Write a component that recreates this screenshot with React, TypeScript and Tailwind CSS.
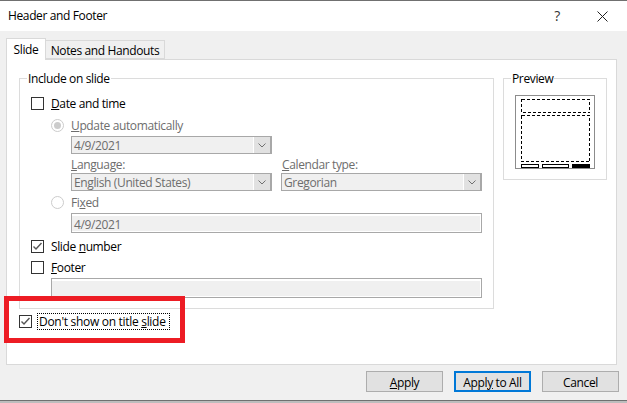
import React from "react";

const Check = ({ checked, className = "" }: { checked?: boolean; className?: string }) => (
  <span className={`flex h-[13px] w-[13px] shrink-0 items-center justify-center border border-[#333333] bg-white ${className}`}>
    {checked && (
      <svg width="11" height="11" viewBox="0 0 11 11" fill="none">
        <path d="M1.5 5.5 L4 8 L9.5 2" stroke="#555555" strokeWidth="1.4" />
      </svg>
    )}
  </span>
);

const Radio = ({ on }: { on?: boolean }) => (
  <span className="flex h-[13px] w-[13px] shrink-0 items-center justify-center rounded-full border border-[#cccccc] bg-white">
    {on && <span className="h-[7px] w-[7px] rounded-full bg-[#cccccc]" />}
  </span>
);

const Select = ({ text, className = "" }: { text: string; className?: string }) => (
  <div className={`flex h-[18px] border border-r-2 border-[#a8a8a8] bg-[#f0f0f0] text-[#6d6d6d] ${className}`}>
    <span className="flex-1 pl-[2px] pt-px leading-[16px]">{text}</span>
    <span className="flex w-[17px] items-center justify-center border-l border-white bg-[#e1e1e1]">
      <svg width="8" height="5" viewBox="0 0 8 5" fill="none">
        <path d="M0.5 0.5 L4 4 L7.5 0.5" stroke="#707070" strokeWidth="1" />
      </svg>
    </span>
  </div>
);

const Input = ({ text, className = "" }: { text?: string; className?: string }) => (
  <div className={`h-5 border border-[#a8a8a8] bg-white pb-px pt-[2px] pr-px text-[#6d6d6d] ${className}`}>
    <div className="h-full bg-[#f0f0f0] pl-[2px] pt-px leading-[15px]">{text}</div>
  </div>
);

const Button = ({ children, primary }: { children: React.ReactNode; primary?: boolean }) => (
  <button
    className={`h-[21px] w-[77px] bg-[#e1e1e1] pt-[2px] text-center leading-none text-black ${
      primary ? "border-2 border-[#0078d7]" : "border border-[#adadad]"
    }`}
  >
    {children}
  </button>
);

export default function App() {
  return (
    <div className="relative h-[403px] w-[627px] overflow-hidden bg-[#bdbdbd] font-['Open_Sans',sans-serif] text-[12px] tracking-[-0.37px] text-black">
      <div className="flex h-[401px] flex-col border-y border-[#707070] bg-[#f0f0f0]">
        {/* Title bar */}
        <div className="flex h-[30px] shrink-0 items-center bg-white pl-2 pr-[19px]">
          <span className="flex-1">Header and Footer</span>
          <span className="mb-[2px] mr-[37px] text-[14px] text-[#333333]">?</span>
          <svg width="11" height="11" viewBox="0 0 11 11" fill="none">
            <path d="M0.5 0.5 L10.5 10.5 M10.5 0.5 L0.5 10.5" stroke="#222222" strokeWidth="1" />
          </svg>
        </div>

        {/* Tabs */}
        <div className="z-10 ml-[6px] mt-[7px] flex h-[22px] shrink-0 items-start">
          <div className="flex h-[22px] w-10 justify-center border border-b-0 border-[#d9d9d9] bg-white pt-[2px] leading-[18px]">
            Slide
          </div>
          <div className="mt-[2px] flex h-[19px] w-[119px] justify-center border border-l-0 border-[#d9d9d9] bg-[#f0f0f0] pt-px leading-[18px]">
            Notes and Handouts
          </div>
        </div>

        {/* Panel */}
        <div className="-mt-px ml-[6px] flex h-[306px] w-[611px] shrink-0 items-start gap-[9px] border border-[#d9d9d9] bg-white pl-3">
          <fieldset className="mt-[10px] h-[239px] w-[475px] shrink-0 border border-[#dcdcdc] pl-[11px] pr-[10px]">
            <legend className="-ml-[4px] h-4 px-px pt-px leading-4">Include on slide</legend>
            <label className="mt-[9px] flex h-4 items-center gap-[7px]">
              <Check />
              <span className="pt-px"><u>D</u>ate and time</span>
            </label>
            <div className="mt-[6px] flex h-4 items-center gap-[7px] pl-5 text-[#6d6d6d]">
              <Radio on />
              <span className="pt-px"><u>U</u>pdate automatically</span>
            </div>
            <div className="ml-10 mt-[3px]">
              <Select text="4/9/2021" className="w-[201px]" />
              <div className="mt-[2px] flex h-4 items-center gap-[10px] pt-px text-[#6d6d6d]">
                <span className="w-[201px]"><u>L</u>anguage:</span>
                <span><u>C</u>alendar type:</span>
              </div>
              <div className="mt-px flex gap-[9px]">
                <Select text="English (United States)" className="w-[201px]" />
                <Select text="Gregorian" className="w-[201px]" />
              </div>
            </div>
            <div className="mt-[3px] flex h-4 items-center gap-[7px] pl-5 text-[#6d6d6d]">
              <Radio />
              <span className="pt-px">Fi<u>x</u>ed</span>
            </div>
            <Input text="4/9/2021" className="ml-10 mt-[3px] w-[411px]" />
            <label className="mt-[5px] flex h-4 items-center gap-[7px]">
              <Check checked />
              <span className="pt-px">Slide <u>n</u>umber</span>
            </label>
            <label className="mt-[5px] flex h-4 items-center gap-[7px]">
              <Check />
              <span className="pt-px"><u>F</u>ooter</span>
            </label>
            <Input className="ml-5 mt-[3px] w-[431px]" />
          </fieldset>

          <fieldset className="mt-[10px] h-[110px] w-[104px] shrink-0 border border-[#dcdcdc] pl-[11px]">
            <legend className="-ml-[4px] h-4 px-px pt-px leading-4">Preview</legend>
            <svg className="mt-[9px]" width="80" height="74" viewBox="0 0 80 74" fill="none" shapeRendering="crispEdges">
              <rect x="0.5" y="0.5" width="79" height="73" fill="white" stroke="#8c8c8c" />
              <rect x="6.5" y="4.5" width="68" height="13" stroke="black" strokeDasharray="3 2" />
              <rect x="6.5" y="20.5" width="68" height="46" stroke="black" strokeDasharray="3 2" />
              <rect x="6.5" y="69.5" width="17" height="3" fill="white" stroke="black" />
              <rect x="27.5" y="69.5" width="26" height="3" fill="white" stroke="black" />
              <rect x="57" y="69" width="18" height="4" fill="black" />
            </svg>
          </fieldset>
        </div>

        {/* Footer */}
        <div className="flex flex-1 justify-end gap-[11px] pr-2 pt-[6px]">
          <Button><u>A</u>pply</Button>
          <Button primary>Appl<u>y</u> to All</Button>
          <Button>Cancel</Button>
        </div>
      </div>

      {/* Checkbox row that sits under the group box */}
      <label className="absolute left-[19px] top-[313px] flex h-4 items-center gap-[5px]">
        <Check checked />
        <span className="border border-dotted border-black px-px leading-[14px]">
          <span className="block w-[129px] whitespace-nowrap pt-px tracking-[-0.3px]">Don't show on title <u>s</u>lide</span>
        </span>
      </label>

      {/* Red annotation */}
      <div className="pointer-events-none absolute left-[4px] top-[296px] h-[47px] w-[181px] border-[5px] border-[#ed1c24]" />
    </div>
  );
}
